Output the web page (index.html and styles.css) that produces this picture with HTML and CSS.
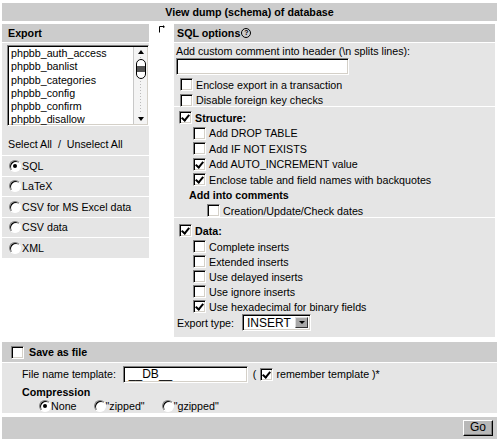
FILE: index.html
```html
<!DOCTYPE html>
<html lang="en">
<head>
    <meta charset="UTF-8">
    <title>View dump</title>
    <link rel="stylesheet" href="styles.css">
</head>
<body>
    <div class="page">
        <div class="title">View dump (schema) of database</div>

        <div class="main">
            <div class="left">
                <div class="head head-export">Export</div>
                <div class="cell list-cell">
                    <div class="listbox">
                        <div class="items">
                            <div>phpbb_auth_access</div>
                            <div>phpbb_banlist</div>
                            <div>phpbb_categories</div>
                            <div>phpbb_config</div>
                            <div>phpbb_confirm</div>
                            <div>phpbb_disallow</div>
                        </div>
                        <div class="scroll">
                            <span class="arrow up"></span>
                            <span class="track"><span class="thumb"><span class="grip"></span></span></span>
                            <span class="arrow down"></span>
                        </div>
                    </div>
                    <div class="select-all">Select All &nbsp;/&nbsp; Unselect All</div>
                </div>
                <div class="cell opt"><span class="rb on"></span>SQL</div>
                <div class="cell opt"><span class="rb"></span>LaTeX</div>
                <div class="cell opt"><span class="rb"></span>CSV for MS Excel data</div>
                <div class="cell opt"><span class="rb"></span>CSV data</div>
                <div class="cell opt"><span class="rb"></span>XML</div>
            </div>

            <div class="marker">
                <svg width="8" height="8" viewBox="0 0 8 8">
                    <path d="M1.5 7.5V1.5H5" fill="none" stroke="#000" stroke-width="1"/>
                    <path d="M5 0L7 2L5 3Z" fill="#000"/>
                </svg>
            </div>

            <div class="right">
                <div class="head head-sql">SQL options<span class="help">?</span></div>

                <div class="cell sql-top">
                    <div class="label">Add custom comment into header (\n splits lines):</div>
                    <div class="field comment"></div>
                    <div class="row"><span class="cb"></span>Enclose export in a transaction</div>
                    <div class="row"><span class="cb"></span>Disable foreign key checks</div>
                </div>

                <div class="cell section structure">
                    <div class="row bold"><span class="cb on"></span>Structure:</div>
                    <div class="row sub"><span class="cb"></span>Add DROP TABLE</div>
                    <div class="row sub"><span class="cb"></span>Add IF NOT EXISTS</div>
                    <div class="row sub"><span class="cb on"></span>Add AUTO_INCREMENT value</div>
                    <div class="row sub"><span class="cb on"></span>Enclose table and field names with backquotes</div>
                    <div class="row bold comments">Add into comments</div>
                    <div class="row subsub"><span class="cb"></span>Creation/Update/Check dates</div>
                </div>

                <div class="cell section data">
                    <div class="row bold"><span class="cb on"></span>Data:</div>
                    <div class="row sub"><span class="cb"></span>Complete inserts</div>
                    <div class="row sub"><span class="cb"></span>Extended inserts</div>
                    <div class="row sub"><span class="cb"></span>Use delayed inserts</div>
                    <div class="row sub"><span class="cb"></span>Use ignore inserts</div>
                    <div class="row sub"><span class="cb on"></span>Use hexadecimal for binary fields</div>
                    <div class="row export-type">
                        <span>Export type:</span>
                        <span class="select"><span class="value">INSERT</span><span class="drop"></span></span>
                    </div>
                </div>
            </div>
        </div>

        <div class="head save-bar"><span class="cb"></span>Save as file</div>
        <div class="cell save-body">
            <div class="row filename">
                <span>File name template:</span>
                <span class="field fname">__DB__</span>
                <span class="paren">(</span><span class="cb on"></span><span>remember template )*</span>
            </div>
            <div class="compression">Compression</div>
            <div class="row radios">
                <span class="radio"><span class="rb on"></span>None</span>
                <span class="radio"><span class="rb"></span>"zipped"</span>
                <span class="radio"><span class="rb"></span>"gzipped"</span>
            </div>
        </div>

        <div class="go-bar"><span class="go">Go</span></div>
    </div>
</body>
</html>
```

FILE: styles.css
```css
body {
    margin: 0;
    background: #fff;
    font-family: "Liberation Sans", Arial, sans-serif;
    font-size: 10.7px;
    color: #000;
}

.page {
    padding: 3px 3px 0 2px;
}

.title {
    height: 18px;
    line-height: 18px;
    background: #cccccc;
    font-weight: bold;
    text-align: center;
}

.head {
    height: 18px;
    line-height: 18px;
    background: #cccccc;
    font-weight: bold;
}

.cell {
    background: #e5e5e5;
}

.main {
    display: flex;
    align-items: flex-start;
    margin: 3px 2px 0 0;
}

/* left column */
.left {
    width: 147px;
    flex: none;
}

.head-export {
    padding-left: 6px;
    margin-bottom: 1px;
}

.list-cell {
    padding: 2px 0 0 5px;
    height: 110px;
}

.listbox {
    display: flex;
    height: 81px;
    box-sizing: border-box;
    border: 1px solid;
    border-color: #808080 #fff #fff #808080;
    box-shadow: inset 1px 1px #000, inset -1px -1px #d4d0c8;
    background: #fff;
}

.items {
    flex: 1;
    padding: 1px 0 0 3px;
    line-height: 13.3px;
    overflow: hidden;
}

.scroll {
    width: 13px;
    margin: 1px 1px 1px 0;
    display: flex;
    flex-direction: column;
    align-items: center;
    background: #f4f4f4;
    border-left: 1px solid #c8c8c8;
}

.arrow {
    width: 0;
    height: 0;
    border-left: 3px solid transparent;
    border-right: 3px solid transparent;
    margin: 3px 0;
}

.arrow.up {
    border-bottom: 4px solid #000;
}

.arrow.down {
    border-top: 4px solid #000;
}

.track {
    flex: 1;
    width: 100%;
    display: flex;
    justify-content: center;
    background: repeating-linear-gradient(to bottom, #bbb 0 1px, transparent 1px 3px) center / 1px 100% no-repeat;
}

.thumb {
    margin-top: 2px;
    width: 10px;
    height: 20px;
    box-sizing: border-box;
    border: 1px solid #000;
    border-radius: 5px;
    background: #fff;
    display: flex;
    align-items: center;
}

.grip {
    width: 100%;
    height: 6px;
    background: #555;
}

.select-all {
    margin-top: 10px;
    padding-left: 1px;
    line-height: 16px;
}

.opt {
    height: 19.5px;
    margin-top: 1px;
    display: flex;
    align-items: center;
    padding-left: 7px;
}

.opt .rb {
    margin-right: 1px;
}

/* controls */
.cb {
    position: relative;
    flex: none;
    width: 13px;
    height: 13px;
    box-sizing: border-box;
    border: 1px solid;
    border-color: #808080 #fff #fff #808080;
    box-shadow: inset 1px 1px #000, inset -1px -1px #d4d0c8;
    background: #fff;
    margin: 0 3px 0 4px;
}

.cb.on::after {
    content: "";
    position: absolute;
    left: 3px;
    top: 1px;
    width: 3px;
    height: 6px;
    border-right: 2px solid #000;
    border-bottom: 2px solid #000;
    transform: rotate(40deg);
}

.rb {
    position: relative;
    flex: none;
    width: 12px;
    height: 12px;
    box-sizing: border-box;
    border-radius: 50%;
    border: 1px solid;
    border-color: #808080 #fff #fff #808080;
    box-shadow: inset 1px 1px #000;
    background: #fff;
}

.rb.on::after {
    content: "";
    position: absolute;
    left: 3px;
    top: 3px;
    width: 4px;
    height: 4px;
    border-radius: 50%;
    background: #000;
}

.field {
    display: inline-block;
    box-sizing: border-box;
    border: 1px solid;
    border-color: #808080 #fff #fff #808080;
    box-shadow: inset 1px 1px #000, inset -1px -1px #d4d0c8;
    background: #fff;
}

/* marker between columns */
.marker {
    width: 25px;
    flex: none;
    display: flex;
    justify-content: center;
    padding-top: 1px;
}

/* right column */
.right {
    flex: 1;
}

.head-sql {
    padding-left: 3px;
    margin-bottom: 1px;
    display: flex;
    align-items: center;
}

.help {
    width: 8px;
    height: 8px;
    margin-left: 1px;
    border: 1px solid #000;
    border-radius: 50%;
    font-size: 7px;
    line-height: 8px;
    text-align: center;
}

.sql-top {
    padding: 2px 0 0 2px;
    height: 61px;
}

.label {
    line-height: 13px;
}

.comment {
    width: 173px;
    height: 17px;
}

.row {
    display: flex;
    align-items: center;
    height: 15.5px;
    white-space: nowrap;
}

.bold {
    font-weight: bold;
}

.section {
    margin-top: 1px;
    padding-left: 1px;
}

.structure {
    padding-top: 3px;
    height: 107px;
}

.data {
    padding-top: 4px;
    height: 115px;
}

.sub {
    padding-left: 14px;
}

.comments {
    padding-left: 14px;
}

.subsub {
    padding-left: 28px;
}

.data .sub {
    height: 15px;
}

.data .bold {
    height: 17px;
}

.export-type {
    height: 17px;
    padding-left: 2px;
}

.select {
    display: inline-flex;
    margin-left: 8px;
    width: 69px;
    height: 17px;
    box-sizing: border-box;
    border: 1px solid;
    border-color: #808080 #fff #fff #808080;
    box-shadow: inset 1px 1px #000, inset -1px -1px #d4d0c8;
    background: #fff;
    padding: 2px;
}

.select .value {
    flex: 1;
    padding-left: 2px;
    line-height: 13px;
    font-size: 12px;
}

.drop {
    width: 13px;
    box-sizing: border-box;
    background: #a8a8a8;
    border: 1px solid;
    border-color: #ddd #333 #333 #ddd;
    display: flex;
    align-items: center;
    justify-content: center;
}

.drop::after {
    content: "";
    border-left: 3px solid transparent;
    border-right: 3px solid transparent;
    border-top: 3px solid #000;
}

/* save as file */
.save-bar {
    margin-top: 5px;
    height: 20px;
    display: flex;
    align-items: center;
    padding-left: 5px;
}

.save-bar .cb {
    margin-right: 5px;
}

.save-body {
    margin-top: 1px;
    height: 50px;
    padding-left: 20px;
}

.filename {
    height: 20px;
    padding-top: 1px;
}

.fname {
    width: 125px;
    height: 17px;
    margin: 0 0 0 7px;
    padding-left: 5px;
    line-height: 15px;
    font-size: 12px;
}

.paren {
    margin-left: 5px;
}

.compression {
    font-weight: bold;
    line-height: 12px;
    margin-top: 2px;
}

.radios {
    padding-left: 17px;
    height: 16px;
}

.radio {
    display: flex;
    align-items: center;
    margin-right: 17px;
}

.radio .rb {
    margin-right: 0;
}

.go-bar {
    margin-top: 4px;
    height: 22px;
    background: #cccccc;
    display: flex;
    justify-content: flex-end;
    align-items: center;
    padding-right: 4px;
}

.go {
    width: 30px;
    height: 16px;
    box-sizing: border-box;
    line-height: 13px;
    text-align: center;
    font-size: 12px;
    background: #b8b8b8;
    border: 1px solid;
    border-color: #fff #000 #000 #fff;
    box-shadow: inset -1px -1px #808080;
}
```
